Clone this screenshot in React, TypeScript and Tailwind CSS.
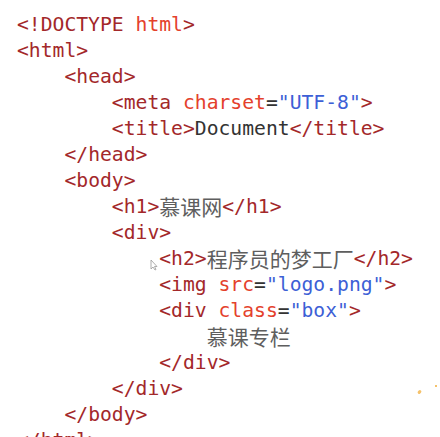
import React from "react";

const T = ({ children }: { children: React.ReactNode }) => (
  <span className="text-[#a3282a]">{children}</span>
);
const A = ({ children }: { children: React.ReactNode }) => (
  <span className="text-[#e4412c]">{children}</span>
);
const V = ({ children }: { children: React.ReactNode }) => (
  <span className="text-[#3d5fd6]">{children}</span>
);
const E = ({ children }: { children: React.ReactNode }) => (
  <span className="text-[#333333]">{children}</span>
);
const C = ({ children }: { children: React.ReactNode }) => (
  <span
    className="text-[#5e5e5e] text-[21px]"
    style={{ fontFamily: '"Noto Sans CJK SC", sans-serif' }}
  >
    {children}
  </span>
);

const Line = ({ indent, children }: { indent: number; children: React.ReactNode }) => (
  <div className="h-[26px] whitespace-pre flex items-center">
    <span>{" ".repeat(indent)}</span>
    {children}
  </div>
);

export default function App() {
  return (
    <div
      className="relative w-[440px] h-[437px] overflow-hidden bg-white pl-[17px] pt-[12px] text-[19.7px]"
      style={{ fontFamily: '"DejaVu Sans Mono", "Liberation Mono", monospace' }}
    >
      <Line indent={0}>
        <T>{"<!DOCTYPE "}</T>
        <A>html</A>
        <T>{">"}</T>
      </Line>
      <Line indent={0}>
        <T>{"<html>"}</T>
      </Line>
      <Line indent={4}>
        <T>{"<head>"}</T>
      </Line>
      <Line indent={8}>
        <T>{"<meta "}</T>
        <A>charset</A>
        <E>=</E>
        <V>"UTF-8"</V>
        <T>{">"}</T>
      </Line>
      <Line indent={8}>
        <T>{"<title>"}</T>
        <E>Document</E>
        <T>{"</title>"}</T>
      </Line>
      <Line indent={4}>
        <T>{"</head>"}</T>
      </Line>
      <Line indent={4}>
        <T>{"<body>"}</T>
      </Line>
      <Line indent={8}>
        <T>{"<h1>"}</T>
        <C>慕课网</C>
        <T>{"</h1>"}</T>
      </Line>
      <Line indent={8}>
        <T>{"<div>"}</T>
      </Line>
      <Line indent={12}>
        <T>{"<h2>"}</T>
        <C>程序员的梦工厂</C>
        <T>{"</h2>"}</T>
      </Line>
      <Line indent={12}>
        <T>{"<img "}</T>
        <A>src</A>
        <E>=</E>
        <V>"logo.png"</V>
        <T>{">"}</T>
      </Line>
      <Line indent={12}>
        <T>{"<div "}</T>
        <A>class</A>
        <E>=</E>
        <V>"box"</V>
        <T>{">"}</T>
      </Line>
      <Line indent={16}>
        <C>慕课专栏</C>
      </Line>
      <Line indent={12}>
        <T>{"</div>"}</T>
      </Line>
      <Line indent={8}>
        <T>{"</div>"}</T>
      </Line>
      <Line indent={4}>
        <T>{"</body>"}</T>
      </Line>
      <Line indent={0}>
        <T>{"</html>"}</T>
      </Line>

      <svg
        className="absolute left-[150px] top-[259px]"
        width="8"
        height="12"
        viewBox="0 0 8 12"
      >
        <path d="M1 1 L1 10 L3 8 L5 11 L6 10.5 L4.5 7.5 L7 7.5 Z" fill="white" stroke="#9a9a9a" strokeWidth="0.8" />
      </svg>
      <div className="absolute left-[418px] top-[390px] w-[3px] h-[4px] bg-[#f5c26b] rotate-45 rounded-sm" />
      <div className="absolute left-[435px] top-[385px] w-[2px] h-[2px] bg-[#f5c26b]" />
    </div>
  );
}
